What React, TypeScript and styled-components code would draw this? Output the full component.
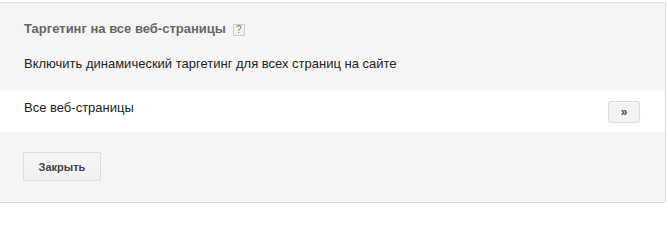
import React from "react";
import styled, { createGlobalStyle } from "styled-components";

const GlobalStyle = createGlobalStyle`
  html, body {
    margin: 0;
    padding: 0;
    background: #ffffff;
    font-family: Arial, "Liberation Sans", sans-serif;
  }
`;

const Page = styled.div`
  padding-top: 2px;
  width: 666px;
`;

const Panel = styled.section`
  background: #f5f5f5;
  border: 1px solid #dcdcdc;
  border-left: none;
  border-radius: 0 2px 2px 0;
  box-sizing: border-box;
  height: 201px;
  display: flex;
  flex-direction: column;
`;

const Header = styled.div`
  padding: 18px 24px 20px;
  display: flex;
  flex-direction: column;
  gap: 20px;
`;

const TitleRow = styled.div`
  display: flex;
  align-items: center;
  gap: 7px;
`;

const Title = styled.h2`
  margin: 0;
  font-size: 13px;
  line-height: 15px;
  font-weight: bold;
  color: #666666;
`;

const HelpMark = styled.span`
  box-sizing: border-box;
  width: 12px;
  height: 12px;
  margin-top: 2px;
  border: 1px solid #cccccc;
  background: #f1f1f1;
  color: #777777;
  font-size: 10px;
  line-height: 10px;
  text-align: center;
`;

const Text = styled.p`
  margin: 0;
  font-size: 13px;
  line-height: 15px;
  color: #222222;
`;

const Row = styled.div`
  background: #ffffff;
  height: 41px;
  box-sizing: border-box;
  padding: 9px 25px 0 24px;
  display: flex;
  align-items: flex-start;
  justify-content: space-between;
`;

const Button = styled.button<{ $wide?: boolean }>`
  box-sizing: border-box;
  height: ${(p) => (p.$wide ? "29px" : "22px")};
  width: ${(p) => (p.$wide ? "78px" : "32px")};
  margin-top: ${(p) => (p.$wide ? "0" : "1px")};
  padding: 0;
  border: 1px solid #dcdcdc;
  border-radius: 2px;
  background: linear-gradient(#f5f5f5, #f1f1f1);
  color: #444444;
  font-family: Arial, "Liberation Sans", sans-serif;
  font-size: ${(p) => (p.$wide ? "11px" : "12px")};
  font-weight: bold;
  cursor: pointer;
`;

const Footer = styled.div`
  padding: 20px 23px 0;
`;

export default function App() {
  return (
    <>
      <GlobalStyle />
      <Page>
        <Panel>
          <Header>
            <TitleRow>
              <Title>Таргетинг на все веб-страницы</Title>
              <HelpMark>?</HelpMark>
            </TitleRow>
            <Text>Включить динамический таргетинг для всех страниц на сайте</Text>
          </Header>
          <Row>
            <Text>Все веб-страницы</Text>
            <Button>»</Button>
          </Row>
          <Footer>
            <Button $wide>Закрыть</Button>
          </Footer>
        </Panel>
      </Page>
    </>
  );
}
